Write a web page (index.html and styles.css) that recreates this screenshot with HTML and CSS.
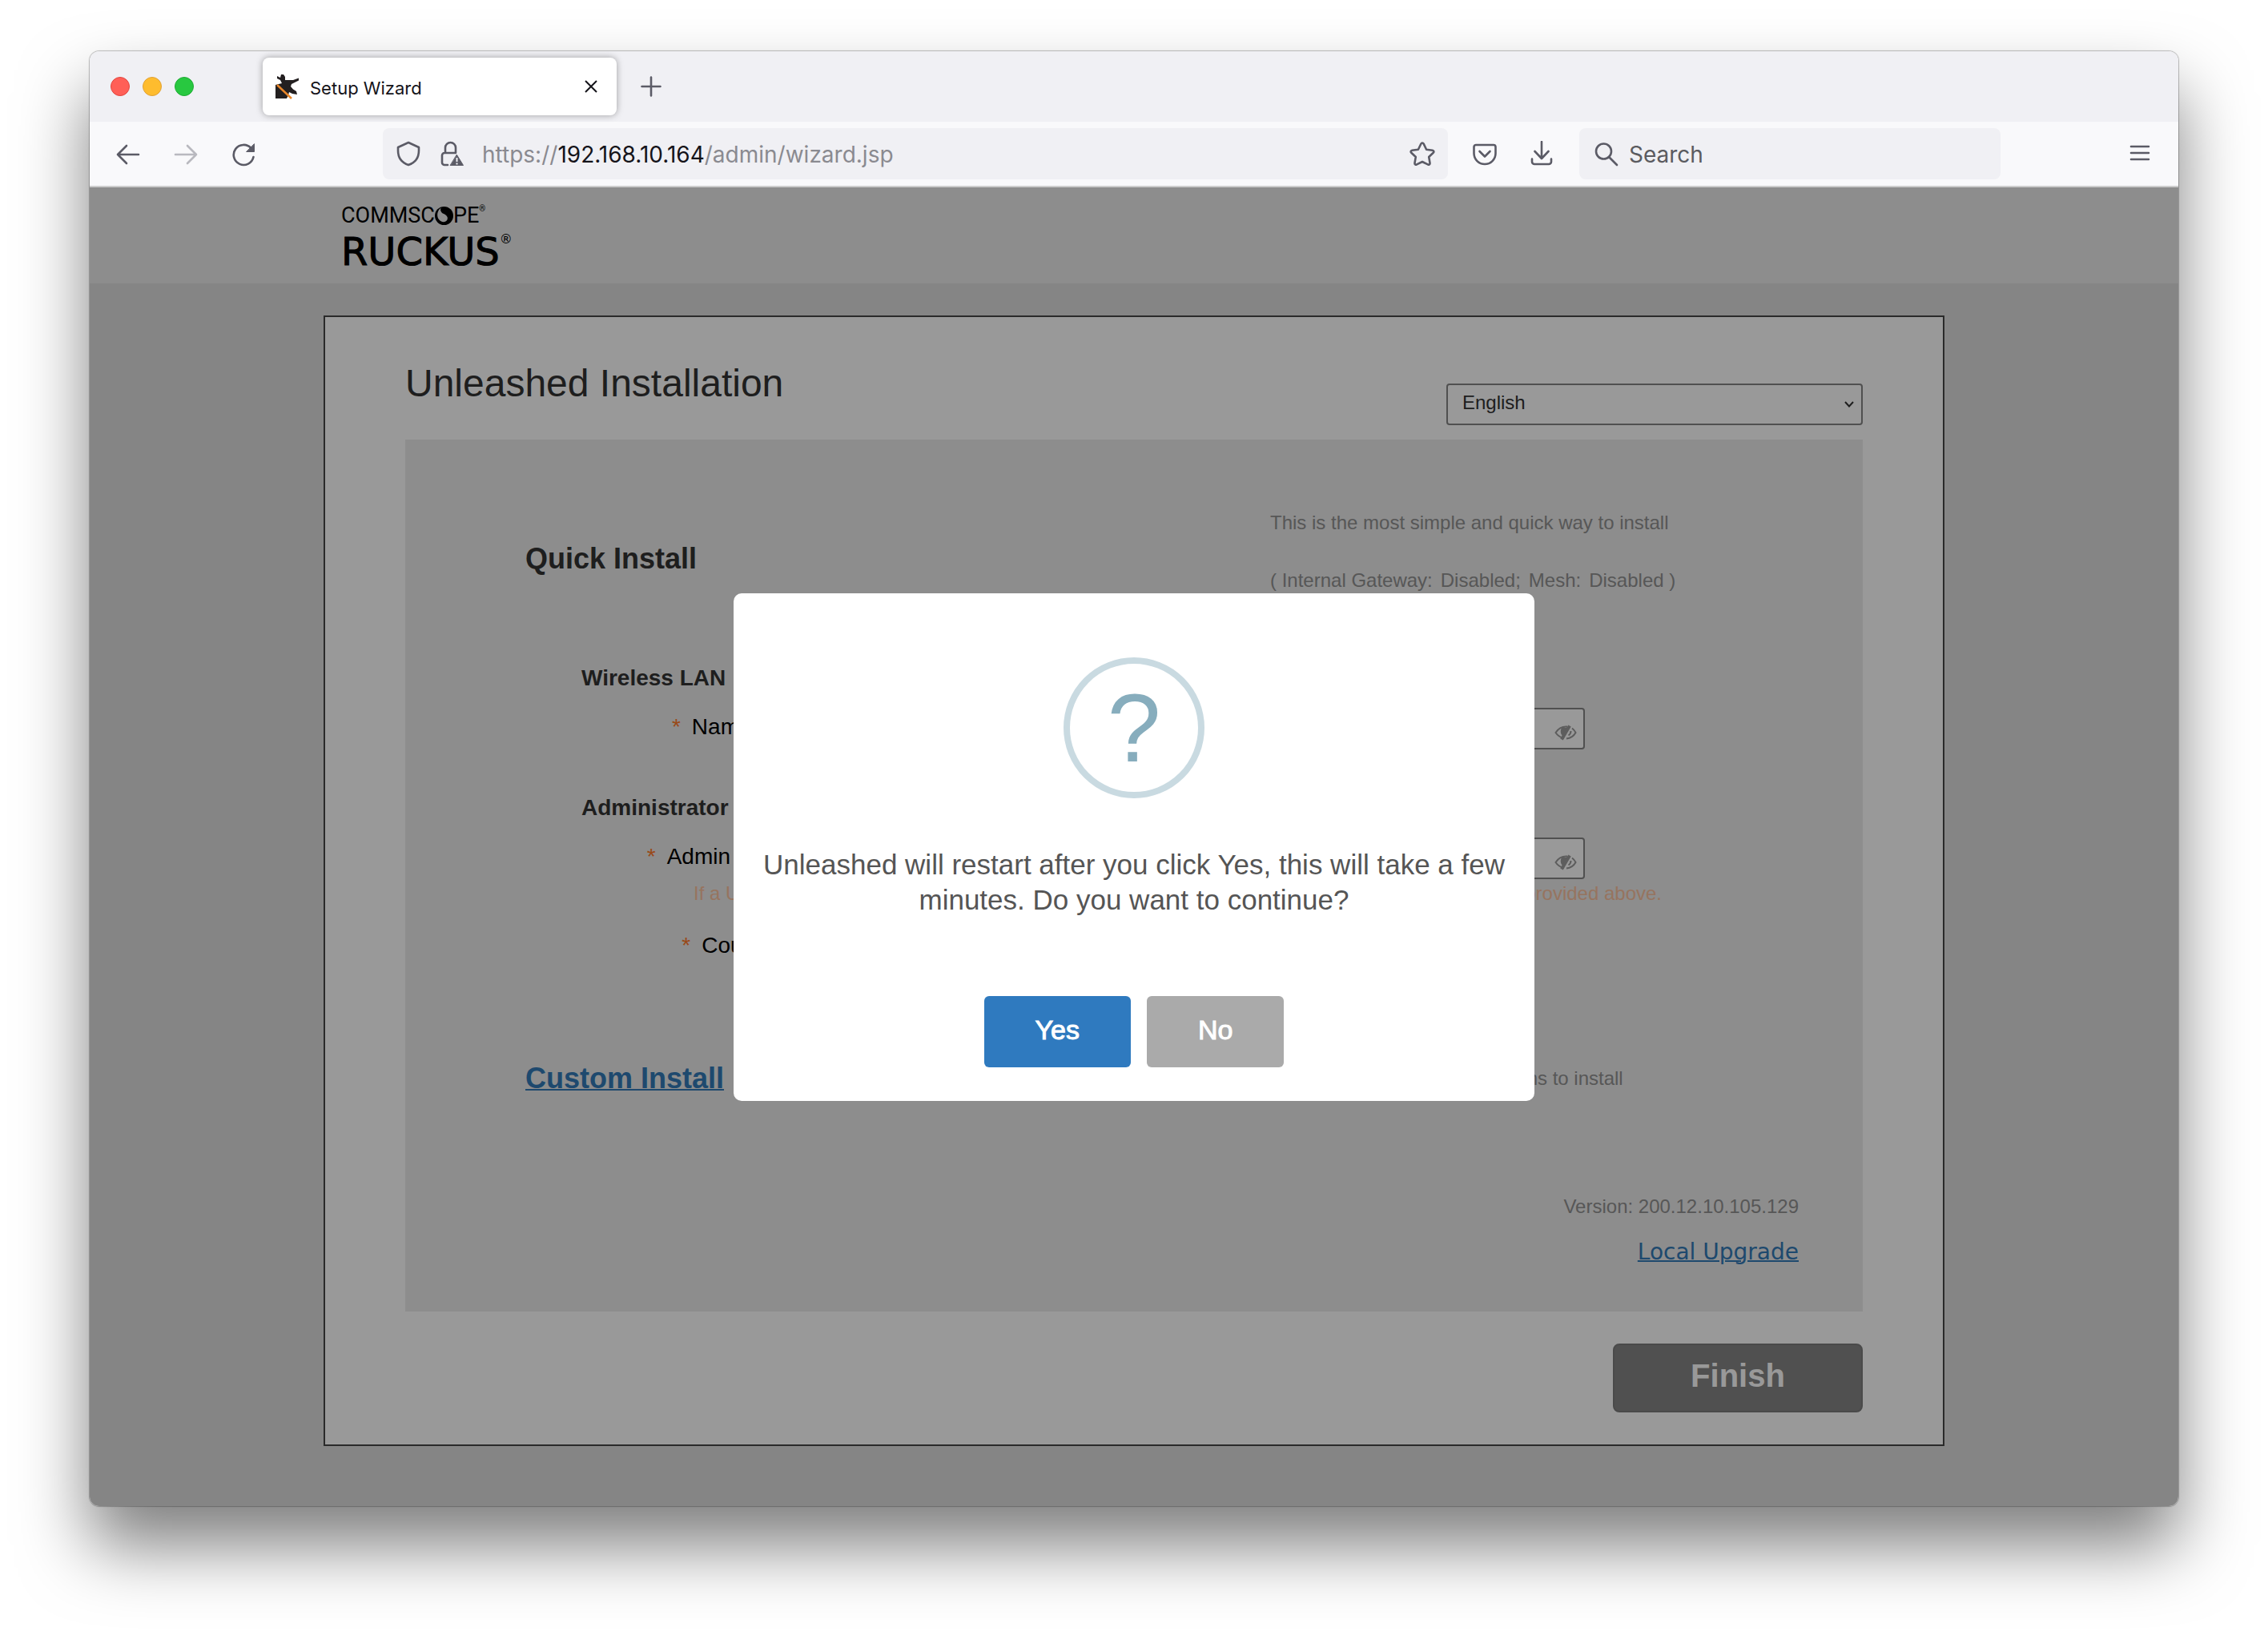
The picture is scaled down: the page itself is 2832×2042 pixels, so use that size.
FILE: index.html
```html
<!DOCTYPE html>
<html lang="en">
<head>
<meta charset="utf-8">
<title>Setup Wizard</title>
<link rel="stylesheet" href="styles.css">
</head>
<body>
<div class="window">
  <div class="tabbar">
    <div class="lights"><span class="light red"></span><span class="light yellow"></span><span class="light green"></span></div>
    <div class="tab">
      <svg class="icon" viewBox="0 0 32 32" aria-hidden="true">
        <path fill="#231f20" d="M2 3l4 2 1-4h3l2 3v4l10 0 7-2.500v3l-5 2.500-4 2-1 3 3 3.500 4 2.500 1 4-6-1-4-2-1 4-2 4H0V14l4-1 4-1-2-4-4-2z"/>
        <path d="M2 14L20 31" stroke="#e8862a" stroke-width="2.500" fill="none"/>
      </svg>
      <span class="tab-title">Setup Wizard</span>
      <button class="plain tab-close" aria-label="Close tab"><svg class="close-icon" viewBox="0 0 20 20"><path d="M3 3l14 14M17 3L3 17"/></svg></button>
    </div>
    <button class="plain" aria-label="New tab"><svg class="line icon" viewBox="0 0 32 32"><path d="M15 4.500v23M3.500 16h23"/></svg></button>
  </div>
  <div class="navbar">
    <div class="history">
      <button class="plain" aria-label="Back"><svg class="line icon" viewBox="0 0 32 32"><path d="M29 17H3M14 6L3 17l11 11"/></svg></button>
      <button class="plain faded" aria-label="Forward"><svg class="line icon" viewBox="0 0 32 32"><path d="M3 17h26M18 6l11 11-11 11"/></svg></button>
      <button class="plain" aria-label="Reload"><svg class="line icon" viewBox="0 0 32 32"><path d="M25.500 9A12.500 12.500 0 1 0 28.500 20"/><path class="solid" d="M29.500 4v9.500h-9.500z"/></svg></button>
    </div>
    <div class="urlbar">
      <svg class="line icon" viewBox="0 0 32 32"><path d="M16 2L29 8v4c0 8-4 15-13 18C7 27 3 20 3 12V8z"/></svg>
      <svg class="line icon" viewBox="0 0 32 32"><path d="M8 15V8.500a6.500 6.500 0 0 1 13 0V15M11 30H7a3 3 0 0 1-3-3v-9a3 3 0 0 1 3-3h14"/><path class="solid" d="M22.500 17.500l8 13h-16z"/><path class="mark" d="M22.500 21v5M22.500 27.500v2"/></svg>
      <span class="url">https://<b>192.168.10.164</b>/admin/wizard.jsp</span>
      <button class="plain" aria-label="Bookmark"><svg class="line icon" viewBox="0 0 32 32"><path d="M16 2.500c.8 0 1.300.4 1.700 1.200l3.400 7 7.600 1.100c1.600.3 2.200 1.900 1 3L24.200 20l1.300 7.600c.2 1.700-1.200 2.600-2.600 1.800L16 26l-6.900 3.400c-1.400.8-2.800-.1-2.600-1.800L7.800 20 2.300 14.800c-1.200-1.100-.6-2.700 1-3l7.600-1.100 3.400-7c.4-.8.900-1.200 1.700-1.200z"/></svg></button>
    </div>
    <div class="tools">
      <button class="plain" aria-label="Save to Pocket"><svg class="line icon" viewBox="0 0 32 32"><path d="M5 5h22a2.500 2.500 0 0 1 2.500 2.500v8a13.500 13.500 0 0 1-27 0v-8A2.500 2.500 0 0 1 5 5zM9.500 13L16 19.500l6.500-6.500"/></svg></button>
      <button class="plain" aria-label="Downloads"><svg class="line icon" viewBox="0 0 32 32"><path d="M15 1v20.500M6.500 13L15 22l8.500-9M3 22.500V26a3 3 0 0 0 3 3h18a3 3 0 0 0 3-3v-3.500"/></svg></button>
    </div>
    <label class="search">
      <svg class="line icon" viewBox="0 0 32 32"><circle cx="12.500" cy="13" r="9.500"/><path d="M19 20l10 10"/></svg>
      <input type="text" placeholder="Search" aria-label="Search">
    </label>
    <button class="plain" aria-label="Menu"><svg class="line icon" viewBox="0 0 32 32"><path d="M5 7h22M5 15h22M5 23h22"/></svg></button>
  </div>

  <div class="viewport">
    <header class="site-header">
      <div class="brand">
        <div class="brand-top">COMMSC<svg class="orb" viewBox="0 0 24 24" aria-hidden="true"><circle cx="12" cy="12" r="12"/><path fill="#ebebeb" d="M8 1.500C3 5 2 12 5 16.500 8 21 14 21 16 17.500c2-4-1.500-6.500-4.500-8C8 7.500 6.500 5 8 1.500z"/></svg>PE<sup class="reg">®</sup></div>
        <div class="brand-bottom">RUCKUS<sup class="reg-large">®</sup></div>
      </div>
    </header>

    <main class="card">
      <div class="card-head">
        <h1>Unleashed Installation</h1>
        <div class="select">
          <select aria-label="Language"><option>English</option></select>
          <svg class="chevron" viewBox="0 0 14 10" aria-hidden="true"><path d="M2 2l5 5.500L12 2"/></svg>
        </div>
      </div>

      <form class="panel">
        <div class="option quick">
          <h2>Quick Install</h2>
          <div class="note tall">
            <p>This is the most simple and quick way to install</p>
            <p class="modes"><span>( Internal Gateway:</span><span>Disabled;</span><span>Mesh:</span><span>Disabled )</span></p>
          </div>
        </div>

        <section class="group">
          <h3>Wireless LAN</h3>
          <div class="row">
            <label for="essid"><span class="star">*</span>Name (ESSID)</label>
            <input class="field" id="essid" type="text">
            <div class="secret">
              <input class="field" type="password" aria-label="Wireless password">
              <svg class="eye" viewBox="0 0 28 20" aria-hidden="true"><path d="M12 17C7 16 3.500 13 1.500 10 5 4.500 10 2 16 2.500M22 4.500c2 1.500 3.500 3.500 4.500 5.500-2.500 4.500-7 7-11.500 7.500M20.500 8c0 2-1.500 4.500-3 5.500"/><path class="lid" d="M17 3l-3 1-4-1c-3 3-3 8 0 11z"/><path class="slash" d="M19 1.500L9 18.500"/></svg>
            </div>
          </div>
        </section>

        <section class="group">
          <h3>Administrator</h3>
          <div class="row">
            <label for="admin"><span class="star">*</span>Admin Username</label>
            <input class="field" id="admin" type="text">
            <div class="secret">
              <input class="field" type="password" aria-label="Admin password">
              <svg class="eye" viewBox="0 0 28 20" aria-hidden="true"><path d="M12 17C7 16 3.500 13 1.500 10 5 4.500 10 2 16 2.500M22 4.500c2 1.500 3.500 3.500 4.500 5.500-2.500 4.500-7 7-11.500 7.500M20.500 8c0 2-1.500 4.500-3 5.500"/><path class="lid" d="M17 3l-3 1-4-1c-3 3-3 8 0 11z"/><path class="slash" d="M19 1.500L9 18.500"/></svg>
            </div>
          </div>
          <p class="hint"><span>If a User</span><span>provided above.</span></p>
          <div class="row">
            <label for="country"><span class="star">*</span>Country Code</label>
            <input class="field" id="country" type="text">
          </div>
        </section>

        <div class="option custom">
          <h2><a href="#custom">Custom Install</a></h2>
          <p class="note">You can customize more options to install</p>
        </div>

        <div class="version">
          <p class="note">Version: 200.12.10.105.129</p>
          <a class="upgrade" href="#upgrade">Local Upgrade</a>
        </div>
      </form>

      <div class="actions"><button class="finish">Finish</button></div>
    </main>

    <div class="overlay">
      <div class="modal" role="dialog" aria-modal="true" aria-labelledby="question">
        <div class="badge">?</div>
        <p class="question" id="question">Unleashed will restart after you click Yes, this will take a few minutes. Do you want to continue?</p>
        <div class="choices"><button class="choice yes">Yes</button><button class="choice no">No</button></div>
      </div>
    </div>
  </div>
</div>
</body>
</html>
```
FILE: styles.css
```css
* { box-sizing: border-box; }
body {
  margin: 0;
  padding: 64px 112px 158px;
  background: #fff;
  color: #333;
  font-family: "Liberation Sans", Arial, sans-serif;
}
h1, h2, h3, p { margin: 0; }
button, input, select { font-family: inherit; }

.window {
  border-radius: 12px;
  overflow: hidden;
  background: #f9f9fb;
  box-shadow: 0 0 1px 1px rgba(0, 0, 0, .25), 0 50px 86px rgba(0, 0, 0, .5);
}

/* Browser chrome */
.plain { display: flex; padding: 0; border: 0; background: none; color: #5b5b66; }
.icon { display: block; flex: none; width: 32px; height: 32px; }
.line { fill: none; stroke: currentColor; stroke-width: 2.6; stroke-linecap: round; stroke-linejoin: round; }
.solid { fill: currentColor; stroke-width: 1; }
.mark { stroke: #f0f0f4; stroke-width: 2; stroke-linecap: butt; }
.faded { opacity: .4; }

.tabbar {
  display: flex;
  align-items: center;
  height: 88px;
  padding: 0 26px;
  background: #f0f0f4;
  font-family: Inter, sans-serif;
}
.lights { display: flex; gap: 16px; margin-right: 86px; }
.light { width: 24px; height: 24px; border: 1px solid #e2463f; border-radius: 50%; background: #ff5f57; }
.yellow { border-color: #e0a136; background: #febc2e; }
.green { border-color: #1fab34; background: #28c840; }
.tab {
  display: flex;
  align-items: center;
  width: 442px;
  height: 72px;
  padding: 0 22px 0 16px;
  margin-right: 28px;
  border-radius: 8px;
  background: #fff;
  box-shadow: 0 0 8px rgba(0, 0, 0, .35);
}
.tab-title { flex: 1; padding: 4px 0 0 11px; font-size: 22px; line-height: 28px; color: #15141a; }
.close-icon { width: 20px; height: 20px; fill: none; stroke: #15141a; stroke-width: 2; }

.navbar {
  display: flex;
  align-items: center;
  height: 82px;
  padding: 0 32px;
  border-bottom: 2px solid #ccc;
  font-family: Inter, sans-serif;
  font-size: 28px;
}
.history, .tools { display: flex; gap: 40px; }
.tools { margin: 0 30px; }
.urlbar, .search { display: flex; align-items: center; height: 64px; border-radius: 8px; background: #f0f0f4; color: #5b5b66; }
.urlbar { flex: 1; gap: 22px; margin-left: 158px; padding: 0 16px; }
.url { flex: 1; padding-top: 2px; color: #8a8a90; line-height: 36px; }
.url b { font-weight: 400; color: #15141a; }
.search { gap: 12px; width: 526px; margin-right: 158px; padding: 0 18px; }
.search input { flex: 1; min-width: 0; padding: 2px 0 0; border: 0; background: none; font-size: 28px; line-height: 36px; }
.search input::placeholder { color: #5b5b60; opacity: 1; }

/* Wizard page */
.viewport { position: relative; padding-bottom: 75px; background: #dedede; }
.site-header { height: 120px; background: #ebebeb; }
.brand { max-width: 2024px; margin: 0 auto; padding: 20px 22px 0; color: #000; }
.brand-top { display: flex; align-items: center; font: 400 27px/30px Roboto, sans-serif; }
.orb { width: 23px; height: 23px; }
.reg { align-self: flex-start; font-size: 10px; line-height: 14px; }
.brand-bottom { display: flex; font: 48px/60px "DejaVu Sans", sans-serif; -webkit-text-stroke: 1px #000; }
.reg-large { font-size: 16px; line-height: 30px; -webkit-text-stroke: 0; }

.card {
  max-width: 2024px;
  margin: 40px auto 0;
  padding: 54px 100px 40px;
  border: 2px solid #464646;
  background: #fff;
}
.card-head { display: flex; justify-content: space-between; align-items: flex-start; margin-bottom: 18px; }
h1 { font-size: 48px; font-weight: 400; line-height: 58px; }
.select { position: relative; width: 520px; margin-top: 29px; }
.select select {
  display: block;
  width: 100%;
  height: 52px;
  padding: 0 18px 6px;
  border: 2px solid #858585;
  border-radius: 4px;
  background: #fff;
  color: #333;
  font-size: 24px;
  appearance: none;
}
.chevron { position: absolute; right: 10px; top: 21px; width: 14px; height: 10px; fill: none; stroke: #333; stroke-width: 2; }

.panel { padding: 68px 80px 54px 150px; background: #ebebeb; }
.option { display: grid; grid-template-columns: 930fr 660fr; }
h2 { font-size: 36px; line-height: 40px; }
.quick h2 { margin-top: 61px; }
.quick { margin-bottom: 70px; }
.note { color: #919191; font-size: 24px; line-height: 40px; }
.tall { line-height: 72px; }
.modes { display: flex; gap: 10px; }
a { color: #337ab7; text-decoration-thickness: 2px; }

.group { margin-bottom: 57px; }
h3 { margin-bottom: 21px; padding-left: 70px; font-size: 28px; line-height: 32px; }
.row { display: flex; align-items: flex-start; height: 52px; padding-right: 267px; }
.row label { flex: none; width: 393px; margin-right: 20px; color: #000; font-size: 28px; line-height: 48px; text-align: right; }
.star { margin-right: 14px; color: #ff7a2b; }
.field { width: 420px; height: 52px; padding: 0 16px; border: 2px solid #858585; border-radius: 4px; background: #fff; font-size: 24px; }
.secret { position: relative; margin-left: auto; }
.eye { position: absolute; right: 10px; top: 21px; width: 28px; height: 20px; fill: none; stroke: #9b9b9b; stroke-width: 2; }
.lid { fill: #9b9b9b; stroke: none; }
.slash { stroke-width: 4; }
.hint { display: flex; justify-content: space-between; margin: 3px 171px 26px 210px; color: #fbc29f; font-size: 24px; line-height: 30px; }

.custom { margin: 118px 0 125px; }
.version { display: flex; flex-direction: column; align-items: flex-end; gap: 22px; }
.version .note { line-height: 30px; }
.upgrade { font: 28px/40px "DejaVu Sans", sans-serif; text-decoration-thickness: 2px; }

.actions { display: flex; justify-content: flex-end; margin-top: 40px; }
.finish {
  width: 312px;
  height: 86px;
  padding: 0 0 6px;
  border: 2px solid #7c7c7c;
  border-radius: 8px;
  background: #858585;
  color: #fff;
  font-size: 40px;
  font-weight: 700;
}

/* Confirmation dialog */
.overlay { position: absolute; inset: 0; display: flex; align-items: center; justify-content: center; background: rgba(0, 0, 0, .4); }
.modal {
  display: flex;
  flex-direction: column;
  align-items: center;
  width: 1000px;
  padding: 80px 34px 42px;
  border-radius: 10px;
  background: #fff;
}
.badge {
  width: 176px;
  height: 176px;
  border: 8px solid #c9dae1;
  border-radius: 50%;
  color: #87adbd;
  font-size: 120px;
  line-height: 160px;
  text-align: center;
}
.question { margin: 61px 0 98px; color: #555; font-size: 35px; line-height: 44px; text-align: center; }
.choices { display: flex; gap: 20px; }
.choice { height: 89px; padding: 0 64px 4px; border: 0; border-radius: 6px; color: #fff; font-size: 34px; -webkit-text-stroke: 1px #fff; }
.yes { background: #2f7abf; }
.no { background: #aaa; }
```
